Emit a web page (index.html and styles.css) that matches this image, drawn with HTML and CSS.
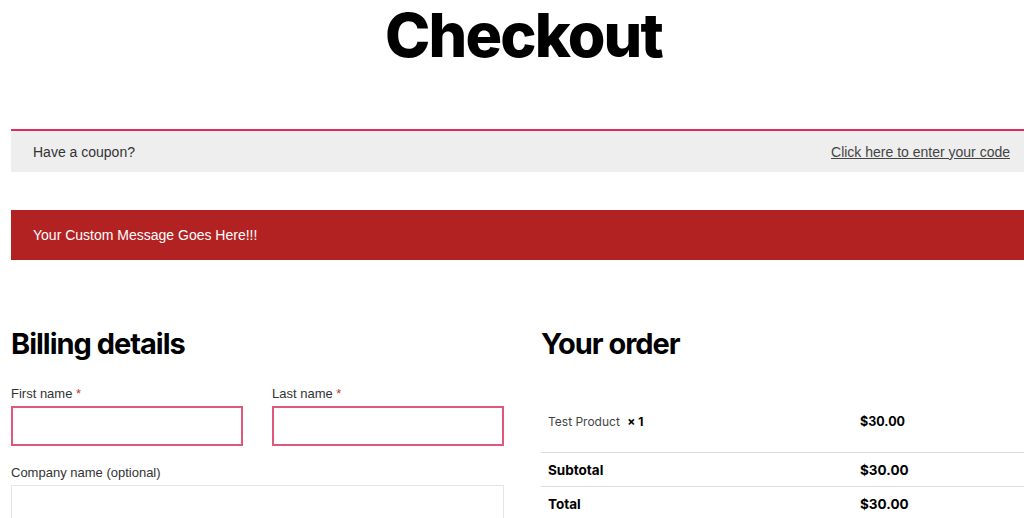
FILE: index.html
```html
<!DOCTYPE html>
<html lang="en">
<head>
<meta charset="utf-8">
<title>Checkout</title>
<link rel="stylesheet" href="styles.css">
</head>
<body>
<div class="page">
  <header class="page-header">
    <h1 class="page-title">Checkout</h1>
  </header>

  <div class="coupon-bar">
    <span class="coupon-text">Have a coupon?</span>
    <a class="coupon-link" href="#">Click here to enter your code</a>
  </div>

  <div class="custom-message">Your Custom Message Goes Here!!!</div>

  <div class="checkout-columns">
    <section class="billing">
      <h2 class="section-title">Billing details</h2>
      <div class="field-row">
        <div class="field">
          <label class="field-label">First name <span class="required">*</span></label>
          <input class="field-input invalid" type="text">
        </div>
        <div class="field">
          <label class="field-label">Last name <span class="required">*</span></label>
          <input class="field-input invalid" type="text">
        </div>
      </div>
      <div class="field field-wide">
        <label class="field-label">Company name (optional)</label>
        <input class="field-input" type="text">
      </div>
    </section>

    <section class="order">
      <h2 class="section-title">Your order</h2>
      <div class="order-table">
        <div class="order-row item-row">
          <div class="cell">Test Product <strong class="qty">&times;&nbsp;1</strong></div>
          <div class="cell amount">$30.00</div>
        </div>
        <div class="order-row total-row">
          <div class="cell label-strong">Subtotal</div>
          <div class="cell amount-big">$30.00</div>
        </div>
        <div class="order-row total-row">
          <div class="cell label-strong">Total</div>
          <div class="cell amount-big">$30.00</div>
        </div>
      </div>
    </section>
  </div>
</div>
</body>
</html>
```

FILE: styles.css
```css
html, body {
  margin: 0;
  padding: 0;
  background: #fff;
  overflow: hidden;
}

body {
  font-family: "Liberation Sans", Arial, sans-serif;
  color: #000;
}

.page {
  width: 1025px;
  margin-left: 11px;
}

.page-header {
  height: 129px;
  display: flex;
  justify-content: center;
}

.page-title {
  margin: 5px 0 0;
  font-family: Inter, "Noto Sans", sans-serif;
  font-weight: 800;
  font-size: 61px;
  line-height: 1;
  letter-spacing: -0.03em;
  color: #000;
}

.coupon-bar {
  border-top: 2px solid #dd2b5b;
  background: #eeeeee;
  height: 41px;
  display: flex;
  align-items: center;
  justify-content: space-between;
  padding: 0 26px 0 22px;
  font-size: 14px;
  color: #333;
}

.coupon-link {
  color: #444;
  text-decoration: underline;
}

.custom-message {
  margin-top: 38px;
  height: 50px;
  background: #b22222;
  color: #fff;
  font-size: 14px;
  display: flex;
  align-items: center;
  padding-left: 22px;
}

.checkout-columns {
  display: grid;
  grid-template-columns: 493px 493px;
  column-gap: 37px;
  margin-top: 69px;
}

.section-title {
  margin: 0;
  font-family: Inter, "Noto Sans", sans-serif;
  font-weight: 700;
  font-size: 29px;
  line-height: 1;
  letter-spacing: -0.035em;
  color: #000;
  height: 57px;
}

.field-row {
  display: grid;
  grid-template-columns: 232px 232px;
  column-gap: 29px;
}

.field {
  display: flex;
  flex-direction: column;
}

.field-wide {
  margin-top: 19px;
}

.field-label {
  font-size: 13px;
  line-height: 15px;
  color: #333;
  margin-bottom: 5px;
}

.required {
  color: #c0392b;
}

.field-input {
  box-sizing: border-box;
  width: 100%;
  height: 40px;
  margin: 0;
  border: 1px solid #e5e5e5;
  background: #fff;
  padding: 0 8px;
  font: inherit;
}

.field-input.invalid {
  border: 2px solid #e0577c;
}

.order-table {
  margin-top: 5px;
  width: 494px;
  font-family: Inter, "Noto Sans", sans-serif;
}

.order-row {
  display: grid;
  grid-template-columns: 312px 1fr;
  align-items: center;
}

.item-row {
  height: 61px;
  border-bottom: 1px solid #dcdcdc;
}

.total-row {
  height: 33px;
  border-bottom: 1px solid #dcdcdc;
}

.total-row:last-child {
  border-bottom: 0;
}

.cell {
  padding-left: 7px;
}

.item-row .cell {
  font-size: 12px;
  color: #444;
}

.qty {
  color: #000;
  font-weight: 700;
  margin-left: 4px;
}

.item-row .amount {
  font-weight: 700;
  color: #000;
  font-size: 12.5px;
}

.label-strong {
  font-weight: 700;
  font-size: 13.5px;
  color: #000;
}

.amount-big {
  font-weight: 700;
  font-size: 13.5px;
  color: #000;
}
```
